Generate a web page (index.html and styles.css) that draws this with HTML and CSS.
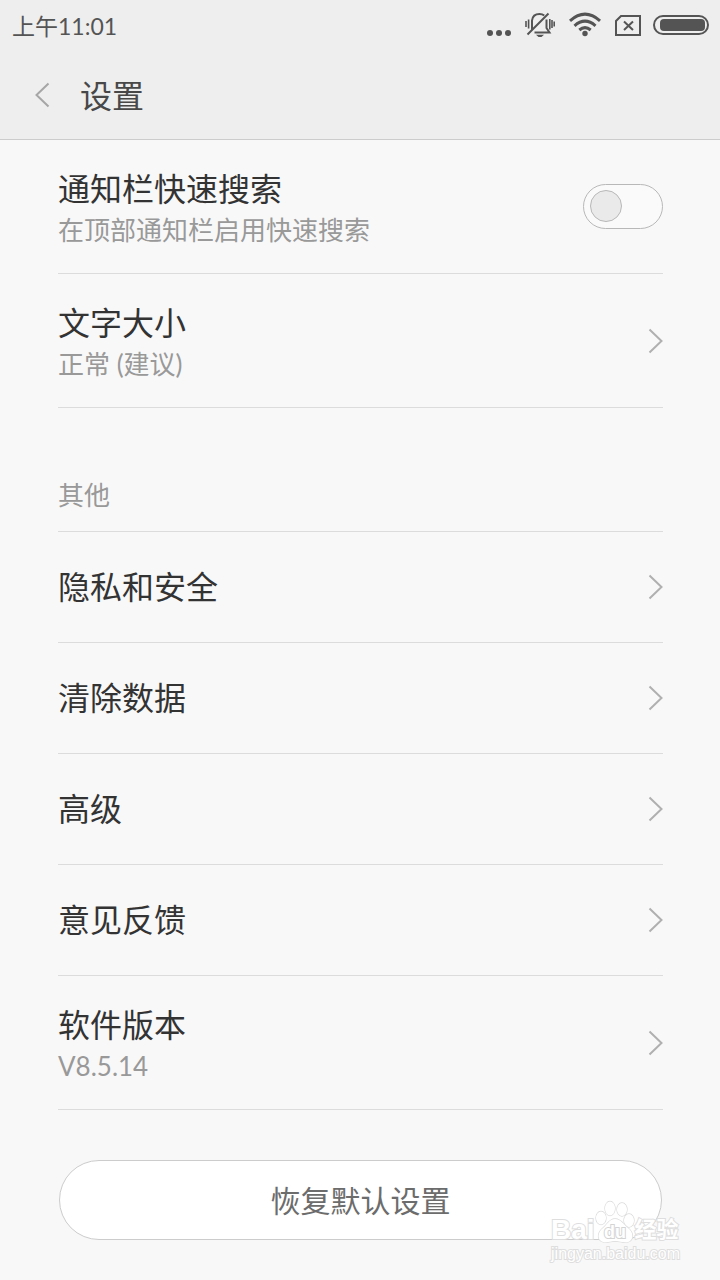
FILE: index.html
```html
<!DOCTYPE html>
<html lang="zh-CN">
<head>
<meta charset="utf-8">
<meta name="viewport" content="width=device-width, initial-scale=1">
<title>设置</title>
<link rel="stylesheet" href="styles.css">
</head>
<body>
<svg class="sprite" aria-hidden="true">
  <symbol id="chevron" viewBox="0 0 16 26"><path d="M2.500 1.500L14.500 13L2.500 24.500" fill="none" stroke="currentColor" stroke-width="2"/></symbol>
</svg>
<header class="top">
  <div class="status">
    <time class="clock">上午11:01</time>
    <div class="indicators">
      <div class="signals">
        <svg width="24" height="30" viewBox="0 0 24 30" fill="currentColor"><circle cx="3" cy="21" r="3"/><circle cx="12" cy="21" r="3"/><circle cx="21" cy="21" r="3"/></svg>
        <svg width="30" height="30" viewBox="0 0 30 30" fill="none" stroke="currentColor" stroke-width="1.600"><path d="M1 9v6M3.600 7.500v9M24.800 7v10.500M27 8v8M29.200 9.500v5"/><path d="M7 17.500V8.500C7.500 4 10.500 1.900 14.500 1.900C16.500 1.900 18 2.400 19.200 3.500M21.500 7.500V16L24.500 20.500H9.500M23.500 1.500L2.500 22.500" stroke-width="2"/><path d="M11 22.800h8l-2.500 2.200h-3z" fill="currentColor" stroke="none"/></svg>
        <svg width="32" height="30" viewBox="0 0 32 30" fill="none" stroke="currentColor" stroke-width="3"><path d="M1 8.800Q16 -4.500 31 8.800M5.500 13.800Q16 4.500 26.500 13.800M10.300 18Q16 13.200 21.700 18"/><circle cx="16" cy="21.500" r="2.700" fill="currentColor" stroke="none"/></svg>
        <svg width="26" height="30" viewBox="0 0 26 30" fill="none" stroke="currentColor" stroke-width="2"><path d="M6 4H25V23H1V9ZM9 9.500L18 18M18 9.500L9 18"/></svg>
      </div>
      <svg width="56" height="30" viewBox="0 0 56 30"><rect x="1" y="4" width="54" height="18" rx="9" fill="none" stroke="currentColor" stroke-width="2"/><rect x="7" y="7" width="45" height="12" rx="4" fill="currentColor"/></svg>
    </div>
  </div>
  <div class="bar">
    <button class="back" type="button" aria-label="返回"><svg class="back-icon"><use href="#chevron"/></svg></button>
    <h1 class="heading">设置</h1>
  </div>
</header>
<main class="page">
  <label class="row row-tall">
    <span class="text"><span class="name">通知栏快速搜索</span><span class="note">在顶部通知栏启用快速搜索</span></span>
    <input class="switch" type="checkbox" role="switch">
  </label>
  <a class="row row-tall" href="#size">
    <span class="text"><span class="name">文字大小</span><span class="note">正常 (建议)</span></span>
    <svg class="arrow"><use href="#chevron"/></svg>
  </a>
  <h2 class="section">其他</h2>
  <a class="row" href="#privacy"><span class="name">隐私和安全</span><svg class="arrow"><use href="#chevron"/></svg></a>
  <a class="row" href="#clear"><span class="name">清除数据</span><svg class="arrow"><use href="#chevron"/></svg></a>
  <a class="row" href="#advanced"><span class="name">高级</span><svg class="arrow"><use href="#chevron"/></svg></a>
  <a class="row" href="#feedback"><span class="name">意见反馈</span><svg class="arrow"><use href="#chevron"/></svg></a>
  <a class="row row-tall" href="#version">
    <span class="text"><span class="name">软件版本</span><span class="note">V8.5.14</span></span>
    <svg class="arrow"><use href="#chevron"/></svg>
  </a>
  <button class="reset" type="button">恢复默认设置</button>
</main>
<div class="watermark">
  <div class="brand">
    <span>Bai</span>
    <svg class="paw" width="40" height="44" viewBox="0 0 40 44"><g fill="#fff" stroke="#dadada" stroke-width="1.300"><ellipse cx="6" cy="18" rx="5" ry="6.500"/><ellipse cx="15" cy="8.500" rx="5" ry="7"/><ellipse cx="27" cy="9.500" rx="5" ry="6.500"/><ellipse cx="34" cy="20.500" rx="5" ry="6.500"/><path d="M20 19C14 19 12 25 8 28C3 32 2 38 6 41C11 44 15 41 20 41C25 41 31 44 35 41C39 38 38 32 33 28C29 25 26 19 20 19Z"/></g><text class="paw-text" x="20" y="38" text-anchor="middle">du</text></svg>
    <span class="brand-cn">经验</span>
  </div>
  <div class="site">jingyan.baidu.com</div>
</div>
</body>
</html>
```
FILE: styles.css
```css
* { box-sizing: border-box; }
body {
  position: relative;
  margin: 0;
  min-height: 100vh;
  background: #f8f8f8;
  color: #333;
  font-family: Lato, "Noto Sans CJK SC", sans-serif;
}
.sprite { position: absolute; width: 0; height: 0; }
.top { background: #eee; border-bottom: 1px solid #ccc; }
.status {
  display: flex;
  justify-content: space-between;
  align-items: center;
  height: 52px;
  padding: 0 11px 0 12px;
  color: #545454;
}
.clock { font-size: 23px; line-height: 52px; }
.indicators { display: flex; gap: 12px; padding-top: 2px; }
.signals { display: flex; gap: 14px; }
.indicators svg { display: block; }
.bar { display: flex; align-items: center; height: 87px; padding-left: 32px; }
.back { display: flex; width: 48px; height: 48px; padding: 0 0 2px 3px; align-items: center; border: 0; background: none; color: #a6a6a6; }
.back-icon { width: 16px; height: 26px; transform: rotate(180deg); }
.heading { margin: 0; font-size: 32px; font-weight: 400; line-height: 48px; color: #484848; }
.page { padding: 0 57px 40px 58px; }
.row {
  display: flex;
  justify-content: space-between;
  align-items: center;
  min-height: 111px;
  border-bottom: 1px solid #dcdcdc;
  color: inherit;
  text-decoration: none;
}
.row-tall { min-height: 134px; }
.text { padding-top: 4px; }
.name { display: block; font-size: 32px; line-height: 42px; }
.note { display: block; font-size: 26px; line-height: 40px; color: #999; }
.arrow { width: 16px; height: 26px; color: #b0b0b0; }
.switch {
  appearance: none;
  width: 80px;
  height: 45px;
  margin: 0;
  padding: 5px 6px;
  border: 1px solid #b8b8b8;
  border-radius: 23px;
  background: #fafafa;
}
.switch::before {
  content: "";
  display: block;
  box-sizing: border-box;
  width: 32px;
  height: 32px;
  border: 1px solid #b8b8b8;
  border-radius: 50%;
  background: #eaeaea;
}
.switch:checked::before { margin-left: auto; }
.section {
  margin: 0;
  padding: 67px 0 16px;
  border-bottom: 1px solid #dcdcdc;
  color: #999;
  font-size: 26px;
  font-weight: 400;
  line-height: 40px;
}
.reset {
  display: block;
  width: calc(100% - 2px);
  height: 80px;
  margin: 50px 1px 0;
  padding: 0 0 2px;
  border: 1px solid #ccc;
  border-radius: 40px;
  background: #fff;
  color: #6c6c6c;
  font: 400 30px Lato, "Noto Sans CJK SC", sans-serif;
}
.watermark {
  position: absolute;
  right: 40px;
  bottom: 16px;
  color: #fff;
  -webkit-text-stroke: 2px #dedede;
  paint-order: stroke fill;
  font-family: "Liberation Sans", "Noto Sans CJK SC", sans-serif;
  pointer-events: none;
}
.brand { display: flex; align-items: flex-end; font-size: 28px; font-weight: 700; line-height: 28px; }
.brand-cn { font-size: 22px; }
.paw-text { fill: #fff; stroke: #d4d4d4; stroke-width: 2px; font-size: 18px; }
.site { font-size: 16px; line-height: 20px; }
```
